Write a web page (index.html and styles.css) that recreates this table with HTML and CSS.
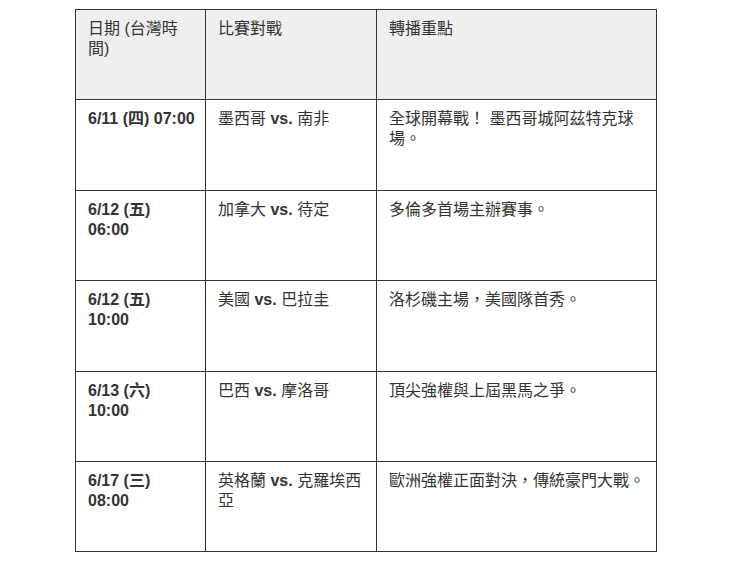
FILE: index.html
```html
<!DOCTYPE html>
<html lang="zh-Hant">
<head>
<meta charset="utf-8">
<title>賽程</title>
<link rel="stylesheet" href="styles.css">
</head>
<body>
<table class="schedule">
  <colgroup>
    <col class="c-date">
    <col class="c-match">
    <col class="c-note">
  </colgroup>
  <thead>
    <tr>
      <th class="date">日期 (台灣時<br>間)</th>
      <th>比賽對戰</th>
      <th class="note">轉播重點</th>
    </tr>
  </thead>
  <tbody>
    <tr>
      <td class="date"><b>6/11 (四) 07:00</b></td>
      <td>墨西哥 <b>vs.</b> 南非</td>
      <td class="note">全球開幕戰！ 墨西哥城阿茲特克球<br>場。</td>
    </tr>
    <tr>
      <td class="date"><b>6/12 (五)<br>06:00</b></td>
      <td>加拿大 <b>vs.</b> 待定</td>
      <td class="note">多倫多首場主辦賽事。</td>
    </tr>
    <tr>
      <td class="date"><b>6/12 (五)<br>10:00</b></td>
      <td>美國 <b>vs.</b> 巴拉圭</td>
      <td class="note">洛杉磯主場，美國隊首秀。</td>
    </tr>
    <tr>
      <td class="date"><b>6/13 (六)<br>10:00</b></td>
      <td>巴西 <b>vs.</b> 摩洛哥</td>
      <td class="note">頂尖強權與上屆黑馬之爭。</td>
    </tr>
    <tr>
      <td class="date"><b>6/17 (三)<br>08:00</b></td>
      <td>英格蘭 <b>vs.</b> 克羅埃西亞</td>
      <td class="note">歐洲強權正面對決，傳統豪門大戰。</td>
    </tr>
  </tbody>
</table>
</body>
</html>
```
FILE: styles.css
```css
html, body {
  margin: 0;
  padding: 0;
  background: #ffffff;
}

body {
  font-family: "Liberation Sans", Arial, "Noto Sans CJK TC", sans-serif;
  font-size: 16px;
  line-height: 20px;
  color: #333333;
}

.schedule {
  margin: 9px 0 0 75px;
  width: 581px;
  table-layout: fixed;
  border-collapse: collapse;
}

.c-date { width: 130px; }
.c-match { width: 171px; }
.c-note { width: 280px; }

.schedule th,
.schedule td {
  border: 1px solid #333333;
  padding: 9px 12px;
  height: 71.4px;
  vertical-align: top;
  text-align: left;
}

.schedule th {
  background: #efefef;
  font-weight: normal;
}

.schedule td.date,
.schedule th.date {
  white-space: nowrap;
}

.schedule .note {
  padding-right: 2px;
}

.schedule b {
  font-weight: bold;
}
```
